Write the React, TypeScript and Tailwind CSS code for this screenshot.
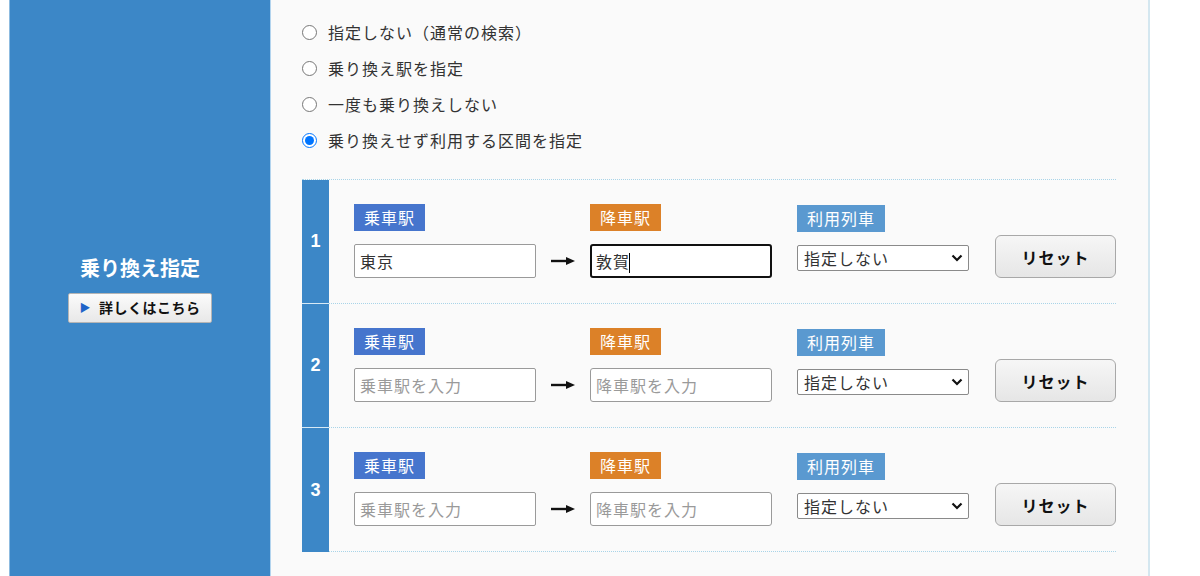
import React, { useState } from "react";

const jp = { fontFamily: '"Noto Sans CJK JP", "Noto Sans", sans-serif' };

const options = [
  "指定しない（通常の検索）",
  "乗り換え駅を指定",
  "一度も乗り換えしない",
  "乗り換えせず利用する区間を指定",
];

type Row = { from: string; to: string; focused?: boolean };

const rows: Row[] = [
  { from: "東京", to: "敦賀", focused: true },
  { from: "", to: "" },
  { from: "", to: "" },
];

function Arrow() {
  return (
    <svg width="24" height="10" viewBox="0 0 24 10" className="block">
      <path d="M0 5h17" stroke="#111" strokeWidth="2.4" />
      <path d="M15 1l9 4-9 4z" fill="#111" />
    </svg>
  );
}

function SectionRow({ n, row, last }: { n: number; row: Row; last: boolean }) {
  return (
    <div className="flex h-[124px]">
      <div
        className={`w-[27px] bg-[#3c87c7] flex items-center justify-center text-white font-bold text-[18px] ${
          last ? "" : "border-b border-[#d8e9f5]"
        }`}
        style={{ fontFamily: '"Liberation Sans", Arial, sans-serif' }}
      >
        {n}
      </div>
      <div className="flex-1 border-b border-dotted border-[#a9d4e8] pl-[25px] pt-[25px] flex items-end pb-[25px]">
        <div className="flex flex-col w-[182px]">
          <span className="self-start h-[27px] px-[10px] bg-[#4675cd] text-white text-[16px] tracking-[1px] leading-[27px]">
            乗車駅
          </span>
          <input
            defaultValue={row.from}
            placeholder="乗車駅を入力"
            className="mt-[13px] h-[34px] w-full border border-[#9a9a9a] rounded-[2px] bg-white px-[5px] text-[16px] tracking-[1px] text-[#333] placeholder:text-[#9a9a9a] outline-none"
            style={jp}
          />
        </div>
        <div className="w-[54px] h-[34px] flex items-center justify-center">
          <Arrow />
        </div>
        <div className="flex flex-col w-[182px]">
          <span className="self-start h-[27px] px-[10px] bg-[#dc8128] text-white text-[16px] tracking-[1px] leading-[27px]">
            降車駅
          </span>
          <div
            className={`mt-[13px] h-[34px] w-full bg-white rounded-[3px] flex items-center ${
              row.focused ? "border-2 border-[#111] px-[4px]" : "border border-[#9a9a9a] px-[5px]"
            }`}
          >
            {row.focused ? (
              <span className="text-[16px] tracking-[1px] text-[#333]">
                {row.to}
                <span className="inline-block w-px h-[20px] bg-black align-middle -ml-[1px]" />
              </span>
            ) : (
              <input
                placeholder="降車駅を入力"
                className="w-full text-[16px] tracking-[1px] placeholder:text-[#9a9a9a] outline-none bg-transparent"
                style={jp}
              />
            )}
          </div>
        </div>
        <div className="flex flex-col w-[172px] ml-[25px] self-start">
          <span className="self-start h-[27px] px-[10px] bg-[#5a99d0] text-white text-[16px] tracking-[1px] leading-[27px]">
            利用列車
          </span>
          <div className="relative mt-[13px] h-[26px] w-full">
            <select
              className="appearance-none w-full h-full border border-[#8a8a8a] rounded-[2px] bg-white pl-[6px] text-[16px] tracking-[1px] text-[#333] outline-none"
              style={jp}
            >
              <option>指定しない</option>
            </select>
            <svg
              width="12"
              height="8"
              viewBox="0 0 12 8"
              className="absolute right-[6px] top-[9px] pointer-events-none"
            >
              <path d="M1.5 1.5l4.5 4.5 4.5-4.5" stroke="#111" strokeWidth="2.2" fill="none" />
            </svg>
          </div>
        </div>
        <button
          className="ml-[26px] w-[121px] h-[43px] rounded-[6px] border border-[#a8a8a8] bg-gradient-to-b from-[#f6f6f6] to-[#e6e6e6] text-[16px] font-bold tracking-[1px] text-[#111]"
          style={jp}
        >
          リセット
        </button>
      </div>
    </div>
  );
}

export default function App() {
  const [selected, setSelected] = useState(3);

  return (
    <div className="flex h-[576px] w-[1200px] bg-white overflow-hidden" style={jp}>
      <div className="ml-[9px] w-[262px] bg-[#3c87c7] border-l border-[#8dbbe0] border-r border-r-[#b3d4ee] flex flex-col items-center justify-center pt-[2px]">
        <h2 className="text-white font-bold text-[20px] leading-[24px]">乗り換え指定</h2>
        <button className="mt-[13px] w-[144px] h-[30px] rounded-[2px] border border-[#b5b5b5] bg-gradient-to-b from-[#fbfbfb] to-[#e8e8e8] flex items-center justify-center gap-[8px] text-[14px] font-bold tracking-[0.5px] text-[#111]">
          <span className="text-[#1f64c8] text-[11px]">▶</span>
          詳しくはこちら
        </button>
      </div>

      <div className="w-[879px] bg-[#fafafa] border-r-2 border-[#d4e7f0] pl-[31px] pr-[32px]">
        <div className="pt-[14px] flex flex-col">
          {options.map((o, i) => (
            <label key={o} className="h-[36px] flex items-center gap-[11px] text-[16px] tracking-[1px] text-[#333] cursor-pointer">
              <input
                type="radio"
                name="transfer"
                checked={selected === i}
                onChange={() => setSelected(i)}
                className="w-[15px] h-[15px] m-0"
              />
              {o}
            </label>
          ))}
        </div>

        <div className="mt-[21px] border-t border-dotted border-[#a9d4e8]">
          {rows.map((r, i) => (
            <SectionRow key={i} n={i + 1} row={r} last={i === rows.length - 1} />
          ))}
        </div>
      </div>
    </div>
  );
}
